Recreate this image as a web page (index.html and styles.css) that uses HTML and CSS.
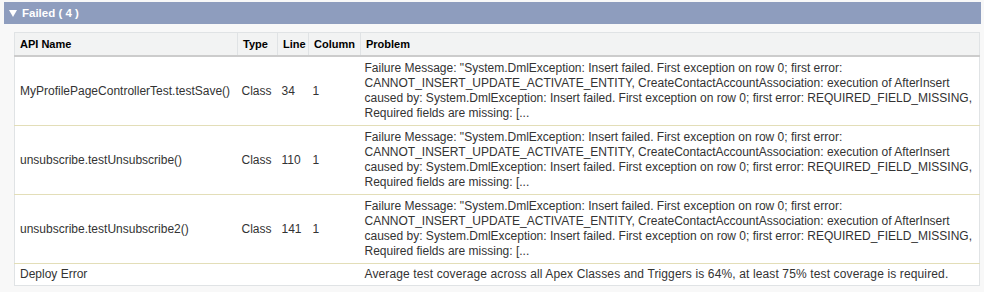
FILE: index.html
```html
<!DOCTYPE html>
<html>
<head>
<meta charset="utf-8">
<link rel="stylesheet" href="styles.css">
</head>
<body>
<div class="section">
  <div class="bar">
    <svg class="twist" width="8" height="7" viewBox="0 0 8 7"><polygon points="0,0 8,0 4,7" fill="#fff"/></svg>
    <span class="title">Failed ( 4 )</span>
  </div>
  <table class="list">
    <colgroup>
      <col class="c-name"><col class="c-type"><col class="c-line"><col class="c-col"><col class="c-prob">
    </colgroup>
    <thead>
      <tr><th>API Name</th><th>Type</th><th>Line</th><th>Column</th><th>Problem</th></tr>
    </thead>
    <tbody>
      <tr>
        <td>MyProfilePageControllerTest.testSave()</td><td>Class</td><td>34</td><td>1</td>
        <td>Failure Message: "System.DmlException: Insert failed. First exception on row 0; first error: CANNOT_INSERT_UPDATE_ACTIVATE_ENTITY, CreateContactAccountAssociation: execution of AfterInsert caused by: System.DmlException: Insert failed. First exception on row 0; first error: REQUIRED_FIELD_MISSING, Required fields are missing: [...</td>
      </tr>
      <tr>
        <td>unsubscribe.testUnsubscribe()</td><td>Class</td><td>110</td><td>1</td>
        <td>Failure Message: "System.DmlException: Insert failed. First exception on row 0; first error: CANNOT_INSERT_UPDATE_ACTIVATE_ENTITY, CreateContactAccountAssociation: execution of AfterInsert caused by: System.DmlException: Insert failed. First exception on row 0; first error: REQUIRED_FIELD_MISSING, Required fields are missing: [...</td>
      </tr>
      <tr>
        <td>unsubscribe.testUnsubscribe2()</td><td>Class</td><td>141</td><td>1</td>
        <td>Failure Message: "System.DmlException: Insert failed. First exception on row 0; first error: CANNOT_INSERT_UPDATE_ACTIVATE_ENTITY, CreateContactAccountAssociation: execution of AfterInsert caused by: System.DmlException: Insert failed. First exception on row 0; first error: REQUIRED_FIELD_MISSING, Required fields are missing: [...</td>
      </tr>
      <tr class="last">
        <td>Deploy Error</td><td></td><td></td><td></td>
        <td>Average test coverage across all Apex Classes and Triggers is 64%, at least 75% test coverage is required.</td>
      </tr>
    </tbody>
  </table>
</div>
</body>
</html>
```

FILE: styles.css
```css
html, body {
  margin: 0;
  padding: 0;
  background: #f8f8f8;
  font-family: "Liberation Sans", Arial, sans-serif;
  color: #333;
}
.section {
  padding: 2px 3px 0 4px;
}
.bar {
  height: 22px;
  background: #8e9dbe;
  display: flex;
  align-items: center;
  padding-left: 5px;
}
.twist {
  display: block;
  margin-right: 5px;
  margin-top: 1px;
}
.title {
  color: #fff;
  font-weight: bold;
  font-size: 11.5px;
}
.list {
  margin: 8px 2px 0 10px;
  width: 965px;
  border-collapse: collapse;
  table-layout: fixed;
  background: #fff;
  border: 1px solid #e0e3e5;
  font-size: 12px;
}
.c-name { width: 223px; }
.c-type { width: 40px; }
.c-line { width: 31px; }
.c-col { width: 52px; }
.c-prob { width: 619px; }
.list th {
  background: #f2f3f3;
  color: #000;
  font-size: 11px;
  font-weight: bold;
  text-align: left;
  height: 22px;
  padding: 0 2px 0 5px;
  border-left: 1px solid #e0e3e5;
  border-bottom: 2px solid #cccccc;
  white-space: nowrap;
}
.list th:first-child { border-left: none; }
.list td {
  padding: 4px 2px 4px 4px;
  line-height: 15px;
  vertical-align: middle;
  border-bottom: 1px solid #e3deb8;
  color: #333;
}
.list td:first-child { padding-left: 5px; }
.list td:last-child { padding-left: 4px; padding-right: 1px; }
.list tr.last td {
  padding-top: 3px;
  padding-bottom: 3px;
  border-bottom: none;
}
.list tr.last td:last-child { letter-spacing: 0.13px; }
```
